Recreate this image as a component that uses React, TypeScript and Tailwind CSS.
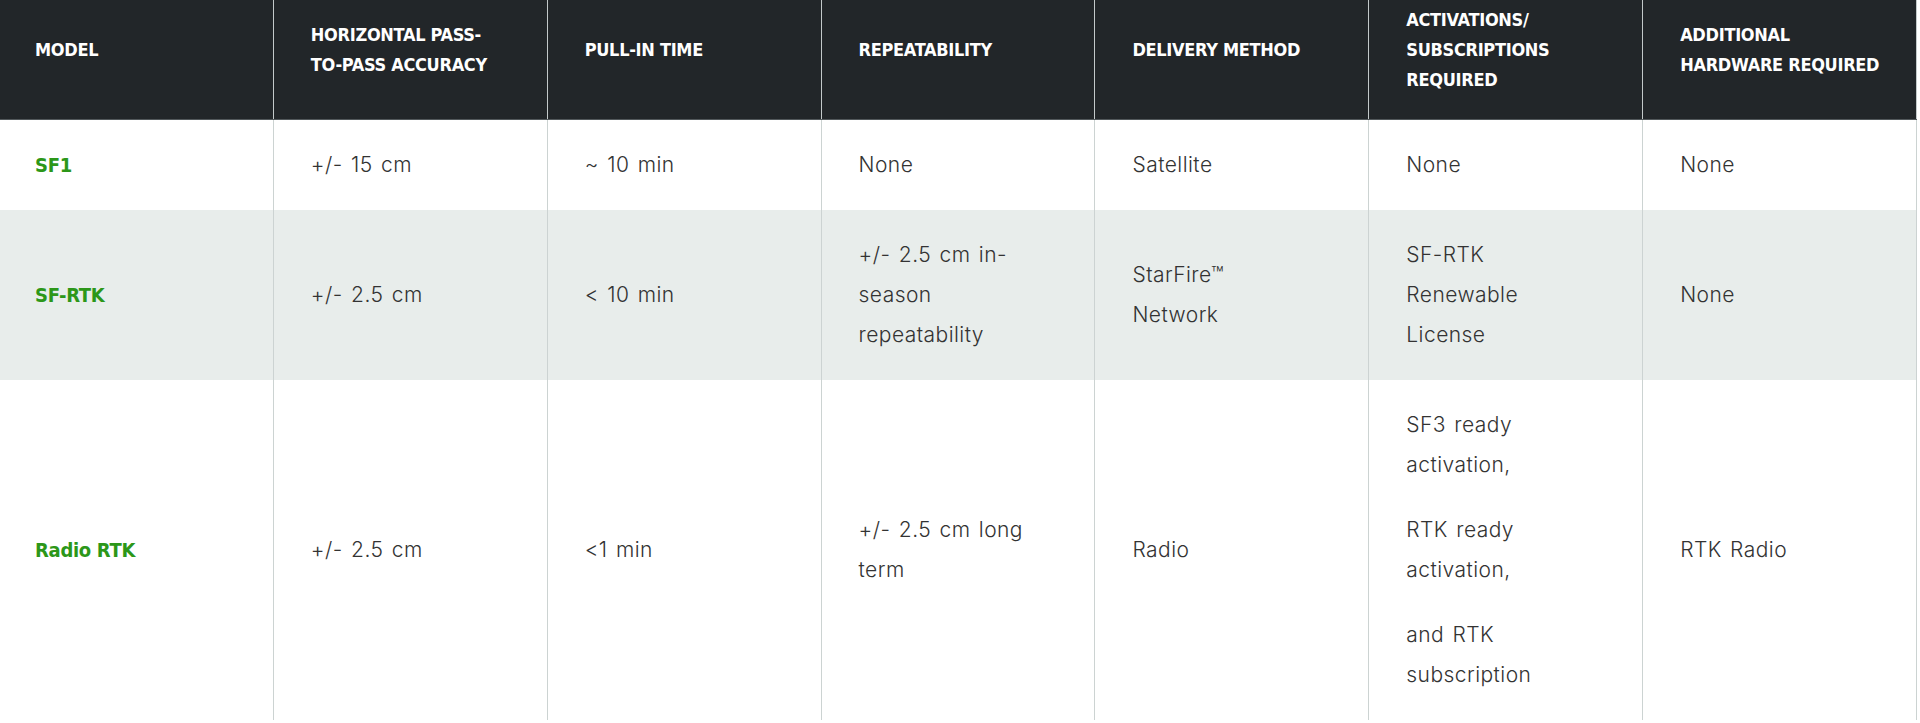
import React from 'react';

type Row = {
  model: string;
  shaded?: boolean;
  cells: string[][][];
};

const headers: string[][] = [
  ['MODEL'],
  ['HORIZONTAL PASS-', 'TO-PASS ACCURACY'],
  ['PULL-IN TIME'],
  ['REPEATABILITY'],
  ['DELIVERY METHOD'],
  ['ACTIVATIONS/', 'SUBSCRIPTIONS', 'REQUIRED'],
  ['ADDITIONAL', 'HARDWARE REQUIRED'],
];

const rows: Row[] = [
  {
    model: 'SF1',
    cells: [[['+/- 15 cm']], [['~ 10 min']], [['None']], [['Satellite']], [['None']], [['None']]],
  },
  {
    model: 'SF-RTK',
    shaded: true,
    cells: [
      [['+/- 2.5 cm']],
      [['< 10 min']],
      [['+/- 2.5 cm in-', 'season', 'repeatability']],
      [['StarFire™', 'Network']],
      [['SF-RTK', 'Renewable', 'License']],
      [['None']],
    ],
  },
  {
    model: 'Radio RTK',
    cells: [
      [['+/- 2.5 cm']],
      [['<1 min']],
      [['+/- 2.5 cm long', 'term']],
      [['Radio']],
      [
        ['SF3 ready', 'activation,'],
        ['RTK ready', 'activation,'],
        ['and RTK', 'subscription'],
      ],
      [['RTK Radio']],
    ],
  },
];

const headFont = "font-['DejaVu_Sans_Condensed','Liberation_Sans_Narrow','DejaVu_Sans',sans-serif] [font-stretch:condensed]";

const App: React.FC = () => {
  return (
    <div className="min-h-screen w-full bg-white">
      <div className="w-[1917px]">
        <div className={`grid grid-cols-7 bg-[#222629] border-b border-[#52585b] ${headFont}`}>
          {headers.map((lines, i) => (
            <div
              key={i}
              className={`flex h-[119px] items-center border-r border-[#c3c9ca] ${i === 0 ? 'pl-[35px]' : 'pl-[37px]'} pb-[20px] text-[18px] font-bold leading-[30px] tracking-[-0.3px] text-white`}
            >
              <div>
                {lines.map((l, j) => (
                  <div key={j} className="whitespace-nowrap">{l}</div>
                ))}
              </div>
            </div>
          ))}
        </div>

        {rows.map((row, r) => (
          <div key={r} className={`grid grid-cols-7 ${row.shaded ? 'bg-[#e8edeb]' : 'bg-white'}`}>
            <div className="flex items-center border-r border-[#ccd3d2] py-[25px] pl-[35px]">
              <span className={`${headFont} text-[20px] font-bold tracking-[-0.3px] text-[#2c9719]`}>
                {row.model}
              </span>
            </div>
            {row.cells.map((paras, c) => (
              <div
                key={c}
                className="flex items-center border-r border-[#ccd3d2] py-[25px] pl-[37px] font-['Inter',sans-serif] text-[21px] font-light leading-[40px] tracking-[0.45px] [word-spacing:2px] text-[#333333]"
              >
                <div className="flex flex-col gap-[25px]">
                  {paras.map((p, k) => (
                    <div key={k}>
                      {p.map((l, j) => (
                        <div key={j} className="whitespace-nowrap">{l}</div>
                      ))}
                    </div>
                  ))}
                </div>
              </div>
            ))}
          </div>
        ))}
      </div>
    </div>
  );
};

export default App;
